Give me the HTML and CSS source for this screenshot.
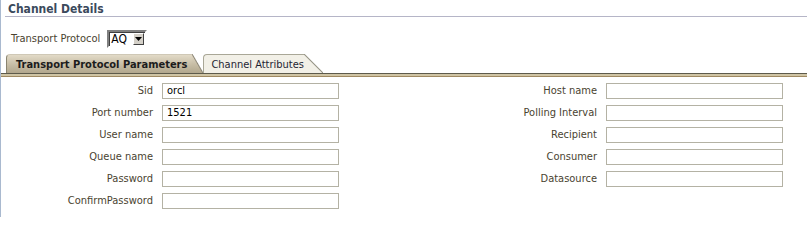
FILE: index.html
```
<!DOCTYPE html>
<html>
<head>
<meta charset="utf-8">
<link rel="stylesheet" href="styles.css">
</head>
<body>
<div class="page">
  <div class="header">Channel Details</div>
  <div class="proto-row">
    <span class="label">Transport Protocol</span>
    <span class="select"><span class="select-value">AQ</span><span class="select-btn"><svg width="7" height="4" viewBox="0 0 7 4"><path d="M0 0H7L3.5 4Z" fill="#000"/></svg></span></span>
  </div>
  <div class="tabs">
    <div class="tab active"><span class="tab-body">Transport Protocol Parameters</span><span class="tab-slant"></span></div>
    <div class="tab inactive"><span class="tab-body">Channel Attributes</span><span class="tab-slant"></span></div>
  </div>
  <div class="tabbar"></div>
  <div class="form">
    <span class="flabel">Sid</span><span class="input">orcl</span>
    <span class="flabel">Host name</span><span class="input"></span>
    <span class="flabel">Port number</span><span class="input">1521</span>
    <span class="flabel">Polling Interval</span><span class="input"></span>
    <span class="flabel">User name</span><span class="input"></span>
    <span class="flabel">Recipient</span><span class="input"></span>
    <span class="flabel">Queue name</span><span class="input"></span>
    <span class="flabel">Consumer</span><span class="input"></span>
    <span class="flabel">Password</span><span class="input"></span>
    <span class="flabel">Datasource</span><span class="input"></span>
    <span class="flabel">ConfirmPassword</span><span class="input"></span>
    <span></span><span></span>
  </div>
</div>
</body>
</html>
```
FILE: styles.css
```
html, body {
  margin: 0;
  padding: 0;
  background: #fff;
}
.page {
  width: 806px;
  height: 217px;
  border-left: 1px solid #a9b9cf;
  font-family: "DejaVu Sans Condensed", "Liberation Sans", sans-serif;
  font-size: 11px;
  color: #4a4330;
  overflow: hidden;
}
.header {
  margin-left: 4px;
  padding: 2px 0 0 3px;
  height: 14px;
  line-height: 14px;
  font-size: 12px;
  font-weight: bold;
  color: #3b4a5c;
  border-bottom: 1px solid #b5b5c7;
}
.proto-row {
  display: flex;
  align-items: center;
  gap: 7px;
  margin-top: 13px;
  padding-left: 10px;
  height: 17px;
}
.select {
  display: flex;
  align-items: center;
  width: 33px;
  height: 12px;
  border: 2px solid;
  border-color: #808080 #fff #fff #808080;
  box-shadow: inset 1px 1px 0 #404040;
  padding: 1px 1px 1px 2px;
  background: #fff;
  color: #000;
  font-size: 12px;
}
.select-value {
  flex: 1;
  line-height: 12px;
}
.select-btn {
  display: flex;
  align-items: center;
  justify-content: center;
  width: 9px;
  height: 10px;
  background: #d4d0c8;
  border: 1px solid;
  border-color: #fff #404040 #404040 #fff;
}
.tabs {
  display: flex;
  align-items: flex-end;
  margin-top: 7px;
  padding-left: 5px;
  height: 19px;
}
.tab {
  display: flex;
  height: 19px;
}
.tab-body {
  display: flex;
  align-items: center;
  height: 18px;
  border-top: 1px solid;
  border-left: 1px solid;
  border-top-left-radius: 4px;
}
.active .tab-body {
  padding: 0 5px 0 9px;
  font-weight: bold;
  color: #1c1c1c;
  background: linear-gradient(#e2dac7, #c4baa2 60%, #b2a78d);
  border-color: #cfc8b6 #cfc8b6 #cfc8b6 #8a8470;
}
.active .tab-slant {
  width: 11px;
  background: linear-gradient(to bottom left, #fff calc(50% - 1px), #8c8676 50%, transparent calc(50% + 1px)),
              linear-gradient(#e2dac7, #c4baa2 60%, #b2a78d);
}
.inactive .tab-body {
  padding: 0 0 0 7px;
  color: #1f1f33;
  background: #f2f0e7;
  border-color: #a9a797;
}
.inactive .tab-slant {
  width: 19px;
  background: linear-gradient(to bottom left, #fff calc(50% - 1px), #9a988a 50%, #f2f0e7 calc(50% + 1px));
}
.tabbar {
  height: 2px;
  border-top: 1px solid #5d5a4b;
  border-bottom: 1px solid #a08a62;
  background: #cfc4a4;
}
.form {
  display: grid;
  grid-template-columns: 152px 177px 249px 177px;
  column-gap: 9px;
  row-gap: 6px;
  grid-auto-rows: 16px;
  padding-top: 6px;
}
.flabel {
  text-align: right;
  line-height: 15px;
}
.input {
  box-sizing: border-box;
  height: 16px;
  border: 1px solid #b4b2a4;
  padding-left: 4px;
  line-height: 14px;
  color: #000;
  font-size: 11px;
}
```
